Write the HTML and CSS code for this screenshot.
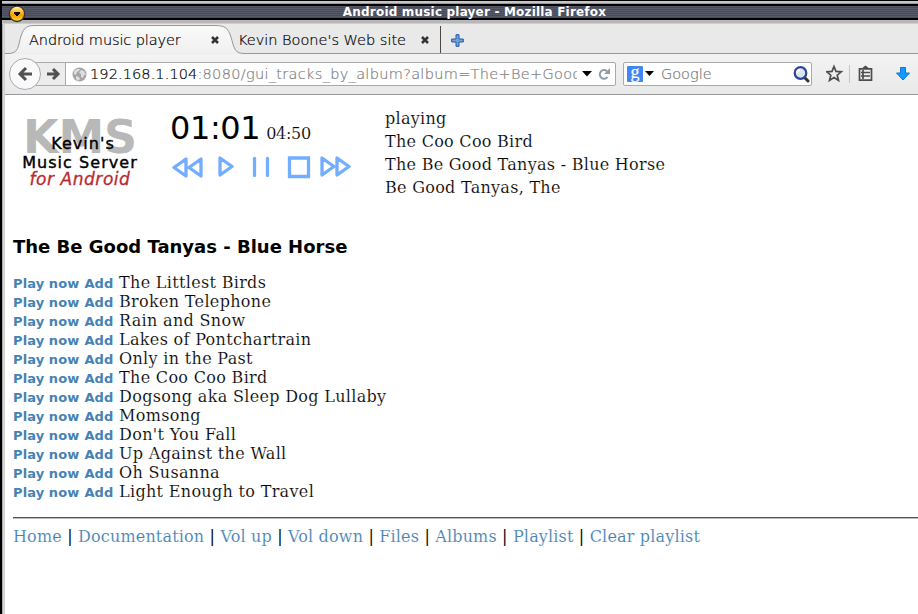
FILE: index.html
```html
<!DOCTYPE html>
<html lang="en">
<head>
<meta charset="utf-8">
<title>Android music player</title>
<link rel="stylesheet" href="styles.css">
</head>
<body>
<div class="window">
  <header class="titlebar"><span class="title">Android music player - Mozilla Firefox</span></header>
  <svg class="window-menu" width="18" height="18" viewBox="0 0 18 18"><defs><linearGradient id="amber" x2="0" y2="1"><stop stop-color="#fff0b0"/><stop offset=".3" stop-color="#ffc43a"/><stop offset=".6" stop-color="#f99b00"/><stop offset="1" stop-color="#ffd52e"/></linearGradient></defs><circle cx="9" cy="9" r="8.3" fill="#3a3430"/><circle cx="9" cy="8.8" r="7" fill="url(#amber)"/><path d="M6 7h6v2h-1v1h-1v1H8v-1H7V9H6z" fill="#000"/></svg>
  <nav class="tabs">
    <svg class="tab-shapes" width="913" height="30" viewBox="0 0 913 30"><defs><linearGradient id="tabfill" x2="0" y2="1"><stop stop-color="#fafafa"/><stop offset="1" stop-color="#f0f0f0"/></linearGradient></defs><path d="M0 29.5H3C14 29.5 13 22 16 12C19 3 22 1.500 31 1.500H210C220 1.500 223 4 226 13C229 23 229 29.500 239 29.500" fill="url(#tabfill)" stroke="#979797"/><path d="M238 29.500H913" stroke="#999"/><path d="M435.500 2V29" stroke="#4c4540"/></svg>
    <span class="tab tab-active">Android music player</span>
    <svg class="close close-first" width="8" height="8" viewBox="0 0 8 8"><path d="M1 1l6 6M7 1L1 7"/></svg>
    <span class="tab tab-second">Kevin Boone's Web site</span>
    <svg class="close close-second" width="8" height="8" viewBox="0 0 8 8"><path d="M1 1l6 6M7 1L1 7"/></svg>
    <svg class="new-tab" width="13" height="13" viewBox="0 0 13 13"><path d="M5 .7h3V5h4.300v3H8v4.300H5V8H.7V5H5z" fill="#6da2dc" stroke="#2759a0"/></svg>
  </nav>
  <div class="toolbar">
    <div class="history">
      <svg width="62" height="34" viewBox="0 0 62 34"><path d="M24 5.500H60.500V28.500H24" fill="#ececec" stroke="#aaa"/><circle cx="20" cy="17" r="15.500" fill="#fafafa" stroke="#a3aab5"/><g fill="none" stroke="#505050" stroke-width="3"><path d="M27 17H16M21 11L15 17l6 6"/><path d="M42 17h9M48 12l5 5-5 5"/></g></svg>
    </div>
    <div class="address">
      <svg class="globe" width="15" height="15" viewBox="0 0 15 15"><circle cx="7.500" cy="7.500" r="7" fill="#a5a5a5"/><path d="M2 4l3-2 3 0-1 2-2 1-1 3-2-1zM9 3l3 1 2 4-2 0-1 3-2-1 0-3-2-1zM4 9l3 1 1 2-2 2-2-2z" fill="#dedede"/></svg>
      <span class="url"><b class="host">192.168.1.104</b>:8080/gui_tracks_by_album?album=The+Be+Good</span>
      <svg class="address-tools" width="31" height="14" viewBox="0 0 31 14"><path d="M0 4h10L5 9.500z"/><path d="M25 4.200A4.300 4.300 0 1 0 25.500 10" fill="none" stroke="#8e9bab" stroke-width="2"/><path d="M28 1v6h-6z" fill="#8e9bab"/></svg>
    </div>
    <div class="search">
      <span class="engine">g</span>
      <svg class="engine-arrow" width="9" height="6" viewBox="0 0 9 6"><path d="M0 0h9L4.500 5z"/></svg>
      <span class="placeholder">Google</span>
      <svg class="magnifier" width="17" height="17" viewBox="0 0 17 17"><path d="M11.500 11.500l3.500 3.500" stroke="#333" stroke-width="3" stroke-linecap="round"/><circle cx="7.500" cy="7" r="5.800" fill="#dce4ef" stroke="#2b459c" stroke-width="2.200"/><path d="M4 7a3 3 0 0 1 3-3" stroke="#fff" stroke-width="2" fill="none"/></svg>
    </div>
    <svg class="actions" width="86" height="20" viewBox="0 0 86 20"><g fill="none" stroke="#4c4c4c" stroke-width="1.700"><path d="M8 2.500l2 4.900 5.300.4-4.100 3.400 1.300 5.200L8 13.600l-4.500 2.800 1.300-5.200L.7 7.800 6 7.400z"/><path d="M33.500 4.800H45.500V16.200H33.500zM35 8.500h9M35 12h9M37 6v9"/></g><path d="M36 4.500h7L41.500 3 39.500 1.500 37.500 3z" fill="#4c4c4c"/><path d="M23.500 1V19" stroke="#c5c5c9"/><path d="M74.500 3.500h5V9h4L77 16 70.500 9h4z" fill="#1598ff" stroke="#0877dc"/></svg>
  </div>
  <main class="page">
    <section class="player">
      <div class="logo"><span class="kms">KMS</span><span class="logo-line kevin">Kevin's</span><span class="logo-line server">Music Server</span><span class="logo-line android">for Android</span></div>
      <div class="controls">
        <div class="time"><span class="elapsed">01:01</span><span class="duration">04:50</span></div>
        <svg class="transport" width="182" height="26" viewBox="0 0 182 26"><g fill="none" stroke="#72adff" stroke-width="3.300" stroke-linejoin="round" stroke-linecap="round"><path d="M14 5v17L2 13.500zM29 5v17L17 13.500zM48 4v17L60 12.500zM150 4v17L162 12.500zM165 4v17L177 12.500z"/><path d="M82.500 4.500v17M95.500 4.500v17"/><path d="M117.500 4h19v18.500h-19z" stroke-linejoin="miter"/></g></svg>
      </div>
      <div class="status"><div>playing</div><div>The Coo Coo Bird</div><div>The Be Good Tanyas - Blue Horse</div><div>Be Good Tanyas, The</div></div>
    </section>
    <h1>The Be Good Tanyas - Blue Horse</h1>
    <ul class="tracks">
      <li><a>Play now</a> <a>Add</a> <span>The Littlest Birds</span></li>
      <li><a>Play now</a> <a>Add</a> <span>Broken Telephone</span></li>
      <li><a>Play now</a> <a>Add</a> <span>Rain and Snow</span></li>
      <li><a>Play now</a> <a>Add</a> <span>Lakes of Pontchartrain</span></li>
      <li><a>Play now</a> <a>Add</a> <span>Only in the Past</span></li>
      <li><a>Play now</a> <a>Add</a> <span>The Coo Coo Bird</span></li>
      <li><a>Play now</a> <a>Add</a> <span>Dogsong aka Sleep Dog Lullaby</span></li>
      <li><a>Play now</a> <a>Add</a> <span>Momsong</span></li>
      <li><a>Play now</a> <a>Add</a> <span>Don't You Fall</span></li>
      <li><a>Play now</a> <a>Add</a> <span>Up Against the Wall</span></li>
      <li><a>Play now</a> <a>Add</a> <span>Oh Susanna</span></li>
      <li><a>Play now</a> <a>Add</a> <span>Light Enough to Travel</span></li>
    </ul>
    <footer><a>Home</a> | <a>Documentation</a> | <a>Vol up</a> | <a>Vol down</a> | <a>Files</a> | <a>Albums</a> | <a>Playlist</a> | <a>Clear playlist</a></footer>
  </main>
</div>
</body>
</html>
```
FILE: styles.css
```css
* { box-sizing: border-box; }
body { margin: 0; overflow: hidden; background: #fff; color: #000; font: 16px/19px "DejaVu Serif", serif; }
svg { display: block; flex: none; }
.window { position: relative; width: 918px; height: 614px; border-left: 2px solid #000; padding-left: 3px; background: linear-gradient(90deg, #aaa 1px, #ddd 1px, #ccc 3px, #fff 3px); }
.titlebar { height: 24px; margin-left: -3px; background: linear-gradient(#000 0 1px, #c8c5c8 1px 3px, #989598 3px 4px, #000 4px 6px, transparent 6px 18px, #000 18px 20px, #b9b6b9 20px 23px, #cdcdcd 23px), repeating-linear-gradient(#555968 0 1px, #484b58 1px 2px); text-align: center; }
.title { display: block; padding-top: 5px; margin-left: 29px; color: #fff; font: bold 12px/15px "DejaVu Sans", sans-serif; letter-spacing: .19px; }
.window-menu { position: absolute; left: 6px; top: 5px; }
.tabs { position: relative; display: flex; height: 30px; background: #e9e9e9; font: 14.5px/32px "DejaVu Sans", sans-serif; font-weight: 200; -webkit-text-stroke: .2px; }
.tab-shapes { position: absolute; left: 0; top: 0; fill: none; }
.tab { position: relative; white-space: nowrap; }
.tab-active { margin-left: 24px; width: 182px; letter-spacing: -.1px; }
.tab-second { margin-left: 19px; width: 183px; }
.close { position: relative; margin-top: 12px; stroke: #333; stroke-width: 2.5; }
.new-tab { position: relative; margin: 10px 0 0 22px; }
.toolbar { display: flex; height: 41px; background: linear-gradient(#f3f3f3, #e9e9e9); border-bottom: 1px solid #999; font: 14.5px/22px "DejaVu Sans", sans-serif; font-weight: 200; -webkit-text-stroke: .2px; }
.history { width: 60px; padding-top: 3px; }
.address, .search { display: flex; align-items: center; height: 24px; margin-top: 8px; background: #fff; border: 1px solid #aaa; border-radius: 0 2px 2px 0; }
.address { width: 551px; padding: 0 2px 0 6px; }
.url { width: 487px; margin-left: 3px; overflow: hidden; white-space: nowrap; color: #808080; letter-spacing: .31px; }
.host { font-weight: 200; color: #000; letter-spacing: .1px; }
.address-tools { margin-left: 5px; }
.search { width: 189px; margin-left: 7px; padding: 0 1px 0 3px; border-radius: 2px; }
.engine { width: 16px; height: 16px; background: #4285f4; color: #fff; font: 18px/12px "Liberation Serif", serif; text-align: center; border-radius: 1px; }
.engine-arrow { margin-left: 2px; }
.placeholder { margin-left: 7px; color: #777; flex: 1; }
.actions { margin: 10px 0 0 14px; }
.page { padding-left: 8px; }
.player { display: flex; height: 121px; }
.logo { position: relative; display: flex; flex-direction: column; width: 134px; padding-top: 39px; text-align: center; font-family: "DejaVu Sans", sans-serif; }
.kms { position: absolute; left: 10px; top: 14px; color: #b8b8b8; font: bold 46px/56px "DejaVu Sans", sans-serif; letter-spacing: -.2px; }
.logo-line { position: relative; height: 19px; line-height: 20px; font-size: 16px; letter-spacing: 1.05px; -webkit-text-stroke: .4px; white-space: nowrap; }
.kevin { left: 3px; }
.server { line-height: 19px; }
.android { color: #b92a30; font-style: oblique; font-size: 17px; height: 20px; line-height: 14px; letter-spacing: .55px; -webkit-text-stroke: .3px; }
.controls { margin-left: 23px; width: 215px; }
.time { height: 59px; display: flex; align-items: baseline; padding-top: 14px; font-family: "DejaVu Sans", sans-serif; }
.elapsed { font-size: 32px; line-height: 38px; letter-spacing: -.4px; }
.duration { font: 16px/19px "DejaVu Serif", serif; margin-left: 6px; letter-spacing: -.3px; -webkit-text-stroke: .15px #fff; }
.transport { margin-left: 1.5px; }
.status { padding-top: 12px; line-height: 23px; letter-spacing: .28px; -webkit-text-stroke: .15px #fff; }
h1 { margin: 17px 0 12px; font: bold 18px/28px "DejaVu Sans", sans-serif; height: 28px; }
.tracks { list-style: none; margin: 0; padding: 0 0 16px; }
.tracks li { height: 19px; white-space: nowrap; }
.tracks span { margin-left: .5px; letter-spacing: .32px; -webkit-text-stroke: .15px #fff; }
a { color: #4682b4; }
.tracks a { font: bold 13px/19px "DejaVu Sans", sans-serif; letter-spacing: .1px; }
footer { border-top: 1px solid #555; box-shadow: inset 0 1px #bbb; padding-top: 9px; white-space: nowrap; letter-spacing: .17px; }
footer a { -webkit-text-stroke: .12px #fff; }
```
